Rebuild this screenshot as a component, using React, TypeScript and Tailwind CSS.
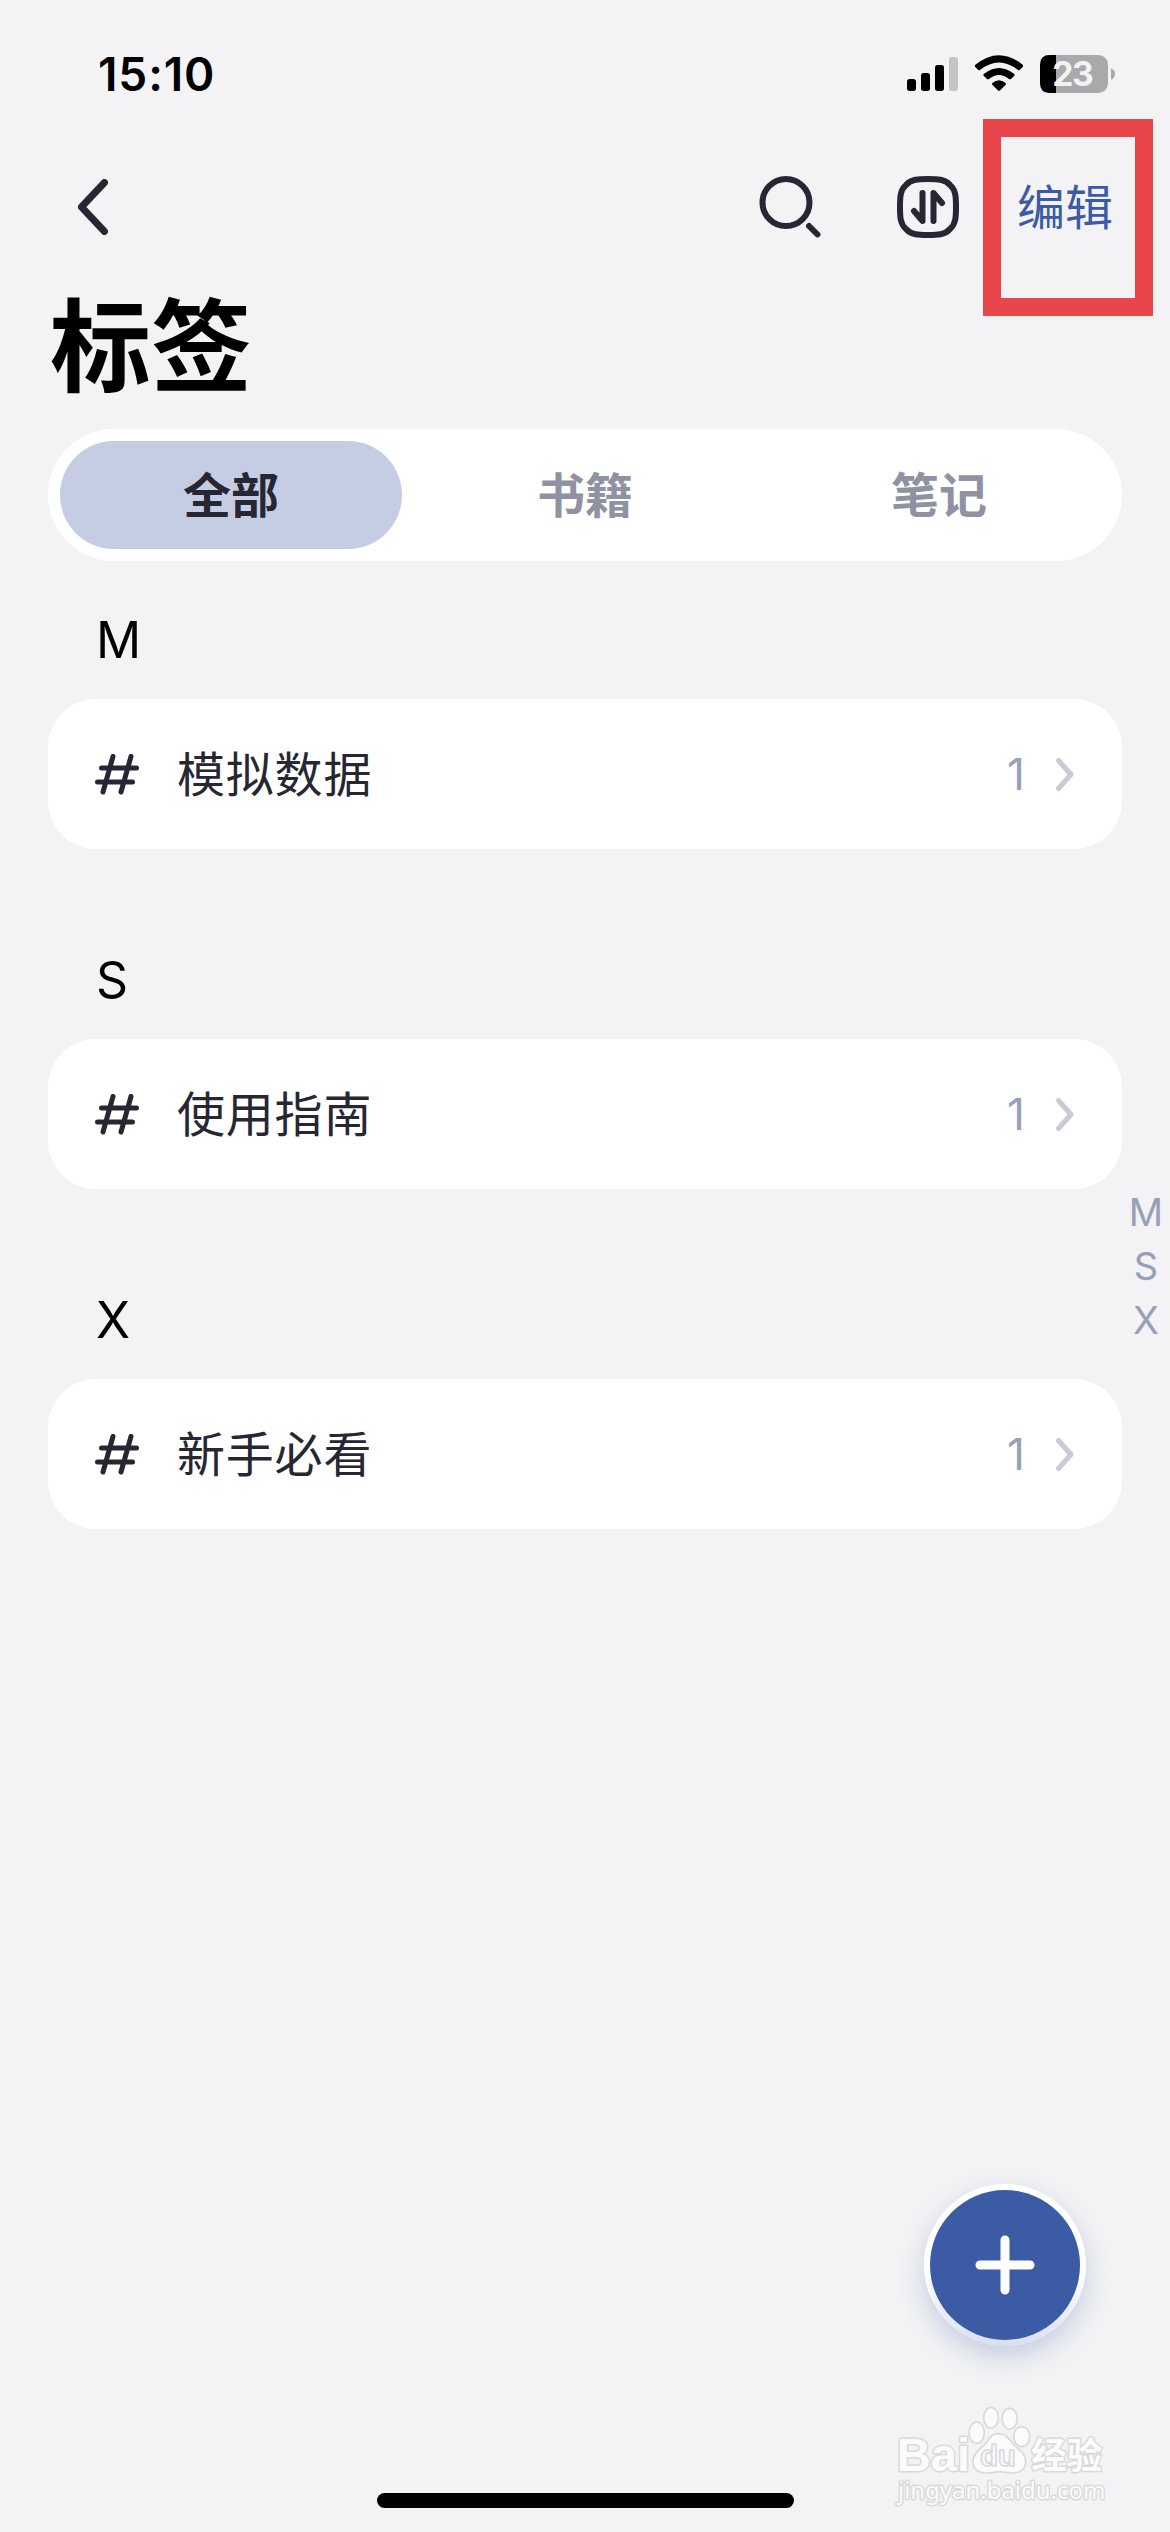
import { useState } from "react";

type TTag = { id: number; name: string; count: number };

type TSection = { letter: string; tags: TTag[] };

const TABS = ["全部", "书籍", "笔记"];

const SECTIONS: TSection[] = [
  { letter: "M", tags: [{ id: 1, name: "模拟数据", count: 1 }] },
  { letter: "S", tags: [{ id: 2, name: "使用指南", count: 1 }] },
  { letter: "X", tags: [{ id: 3, name: "新手必看", count: 1 }] },
];

const StatusBar = () => (
  <div className="flex h-[144px] items-start justify-between pr-[55px] pl-[98px]">
    <p className="mt-[46px] text-[46px] leading-[56px] font-semibold tracking-[0.9px] text-black">
      15:10
    </p>
    <div className="mt-[55px] flex gap-[17px]">
      <svg width="51" height="38" viewBox="561 165 153 114">
        <rect x="561" y="237" width="27" height="36" rx="8" />
        <rect x="603" y="219" width="27" height="54" rx="8" />
        <rect x="645" y="195" width="27" height="78" rx="8" />
        <rect x="687" y="171" width="27" height="102" rx="8" fill="#c4c4c6" />
      </svg>
      <svg width="48" height="38" viewBox="765 165 144 114">
        <path d="M765 195 Q837 136 909 195 Q911 198 909 200 L899 210 Q897 212 894 210 Q837 165 780 210 Q777 212 775 210 L765 200 Q763 198 765 195Z" />
        <path d="M791 222 Q837 186 883 222 Q885 225 883 227 L873 237 Q870 239 867 237 Q837 213 807 237 Q804 239 801 237 L791 227 Q789 225 791 222Z" />
        <path d="M817 249 Q837 233 857 249 Q859 252 857 254 L839 272 Q837 273 835 272 L817 254 Q815 252 817 249Z" />
      </svg>
      <svg
        className="overflow-visible"
        width="75"
        height="38"
        viewBox="960 165 225 114"
      >
        <rect x="960" y="165" width="204" height="114" rx="29" fill="#a9a9ab" />
        <path d="M1008 165H989Q960 165 960 194V250Q960 279 989 279H1008Z" />
        <path d="M1173 205Q1185 210 1185 222T1173 239Z" fill="#a9a9ab" />
        <text
          x="1059"
          y="258"
          textAnchor="middle"
          className="fill-[#f3f3f5] text-[101px] font-bold"
          textLength="124"
        >
          23
        </text>
      </svg>
    </div>
  </div>
);

const NavBar = () => (
  <div className="flex h-[126px] items-center pl-[78px]">
    <button className="cursor-pointer">
      <svg width="30" height="56" viewBox="0 0 30 56" fill="none">
        <path
          d="M26.5 3.5L3.5 28L26.5 52.5"
          stroke="#262733"
          strokeWidth="7"
          strokeLinecap="round"
          strokeLinejoin="round"
        />
      </svg>
    </button>
    <div className="ml-auto flex items-center pr-[57px]">
      <button className="mr-[76px] cursor-pointer">
        <svg
          width="62"
          height="62"
          viewBox="0 0 62 62"
          fill="none"
          stroke="#262733"
          strokeWidth="6"
          strokeLinecap="round"
        >
          <circle cx="27" cy="26.5" r="23.5" />
          <path d="M50 50L58.5 58.5" />
        </svg>
      </button>
      <button className="mr-[58px] cursor-pointer">
        <svg
          width="62"
          height="62"
          viewBox="0 0 62 62"
          fill="none"
          stroke="#262733"
          strokeWidth="6"
          strokeLinecap="round"
          strokeLinejoin="round"
        >
          <path d="M31 3C40 3 48 3 53 9C59 14 59 22 59 31C59 40 59 48 53 53C48 59 40 59 31 59C22 59 14 59 9 53C3 48 3 40 3 31C3 22 3 14 9 9C14 3 22 3 31 3Z" />
          <path d="M25.5 17V45L17 35" />
          <path d="M36.5 45V17L45 27" />
        </svg>
      </button>
      <button className="cursor-pointer pt-[2px] text-[48px] leading-[60px] text-[#3c5ba5]">
        编辑
      </button>
    </div>
  </div>
);

const TagRow = ({ tag }: { tag: TTag }) => (
  <div className="flex h-[150px] items-center rounded-[48px] bg-white pr-[48px] pl-[47px]">
    <svg
      width="45"
      height="41"
      viewBox="0 0 45 41"
      fill="none"
      stroke="#262733"
      strokeWidth="5"
      strokeLinecap="round"
    >
      <path d="M6.5 14H41.5M2.5 28H37.5M18 2.5L8 38M36 2.5L26 38" />
    </svg>
    <p className="ml-[37px] pt-[2px] text-[48px] leading-[60px] tracking-[0.8px] text-[#262733]">
      {tag.name}
    </p>
    <p className="mr-[31px] ml-auto text-[44px] leading-[60px] text-[#98a0b9]">
      {tag.count}
    </p>
    <svg width="18" height="33" viewBox="0 0 18 33" fill="none">
      <path
        d="M2.5 2.5L15 16.5L2.5 30.5"
        stroke="#c9cad6"
        strokeWidth="5"
        strokeLinecap="round"
        strokeLinejoin="round"
      />
    </svg>
  </div>
);

const Watermark = () => (
  <svg
    className="absolute top-[2400px] left-[890px]"
    width="230"
    height="115"
    viewBox="60 750 690 345"
    fill="#fbfbfc"
    stroke="#d9d9db"
    strokeWidth="5"
    strokeLinejoin="round"
  >
    <g style={{ paintOrder: "stroke" }} strokeWidth="9">
      <text
        x="80"
        y="964"
        textLength="220"
        lengthAdjust="spacingAndGlyphs"
        className="font-['Liberation_Sans'] text-[140px] font-bold"
      >
        Bai
      </text>
      <text
        x="484"
        y="956"
        textLength="212"
        lengthAdjust="spacingAndGlyphs"
        className="text-[110px] font-bold"
      >
        经验
      </text>
      <text
        x="84"
        y="1046"
        textLength="622"
        lengthAdjust="spacingAndGlyphs"
        className="font-['Noto_Sans'] text-[73px]"
      >
        jingyan.baidu.com
      </text>
    </g>
    <ellipse cx="320" cy="848" rx="23" ry="32" />
    <ellipse cx="363" cy="803" rx="22" ry="31" />
    <ellipse cx="419" cy="806" rx="23" ry="31" />
    <ellipse cx="455" cy="860" rx="24" ry="30" />
    <path d="M385 851C412 851 420 872 432 885C448 900 467 910 467 935C467 960 446 970 425 969C410 968 400 965 388 965C375 965 362 970 347 969C322 968 308 955 309 933C310 910 330 898 343 885C356 870 362 851 385 851Z" />
    <text
      x="331"
      y="948"
      textLength="106"
      lengthAdjust="spacingAndGlyphs"
      className="font-['Liberation_Sans'] text-[88px] font-bold"
    >
      du
    </text>
  </svg>
);

const App = () => {
  const [activeTab, setActiveTab] = useState(0);

  return (
    <div className="relative h-[2532px] w-[1170px] overflow-hidden bg-[#f3f3f5] font-[Inter,'Noto_Sans_CJK_SC',sans-serif]">
      <StatusBar />
      <NavBar />
      <h1 className="ml-[50px] h-[159px] pt-[17px] text-[101px] leading-[120px] font-bold text-black">
        标签
      </h1>

      <div className="mx-[48px] flex h-[132px] gap-[12px] rounded-full bg-white p-[12px]">
        {TABS.map((tab, i) => (
          <button
            key={tab}
            onClick={() => setActiveTab(i)}
            className={`flex-1 cursor-pointer rounded-full pt-[2px] text-[48px] leading-[60px] font-bold ${
              i === activeTab
                ? "bg-[#c4cde4] text-[#262733]"
                : "text-[#8f92a3]"
            }`}
          >
            {tab}
          </button>
        ))}
      </div>

      <div className="mx-[48px] flex flex-col">
        {SECTIONS.map((section) => (
          <div key={section.letter} className="mb-[52px]">
            <p className="flex h-[138px] items-end pb-[29px] pl-[48px] text-[50px] leading-[60px] text-black">
              {section.letter}
            </p>
            {section.tags.map((tag) => (
              <TagRow key={tag.id} tag={tag} />
            ))}
          </div>
        ))}
      </div>

      {/* letter index */}
      <div className="absolute top-[1185px] right-0 flex w-[48px] flex-col items-center text-[38px] leading-[54px] text-[#98a0b9]">
        {SECTIONS.map((section) => (
          <span key={section.letter}>{section.letter}</span>
        ))}
      </div>

      <div className="absolute top-[119px] left-[983px] h-[197px] w-[170px] border-[18px] border-[#e8464b]" />

      <button className="absolute top-[2184px] left-[924px] flex h-[162px] w-[162px] cursor-pointer items-center justify-center rounded-full bg-linear-to-b from-white from-55% to-[#d9dff0] p-[6px] shadow-[0_10px_26px_rgba(60,91,165,0.25)]">
        <span className="flex h-full w-full items-center justify-center rounded-full bg-[#3c5ba5]">
          <svg width="60" height="60" viewBox="0 0 60 60" fill="none">
            <path
              d="M30 5V55M5 30H55"
              stroke="#fff"
              strokeWidth="9"
              strokeLinecap="round"
            />
          </svg>
        </span>
      </button>

      <Watermark />

      <div className="absolute bottom-[24px] left-[377px] h-[15px] w-[417px] rounded-full bg-black" />
    </div>
  );
};

export default App;
